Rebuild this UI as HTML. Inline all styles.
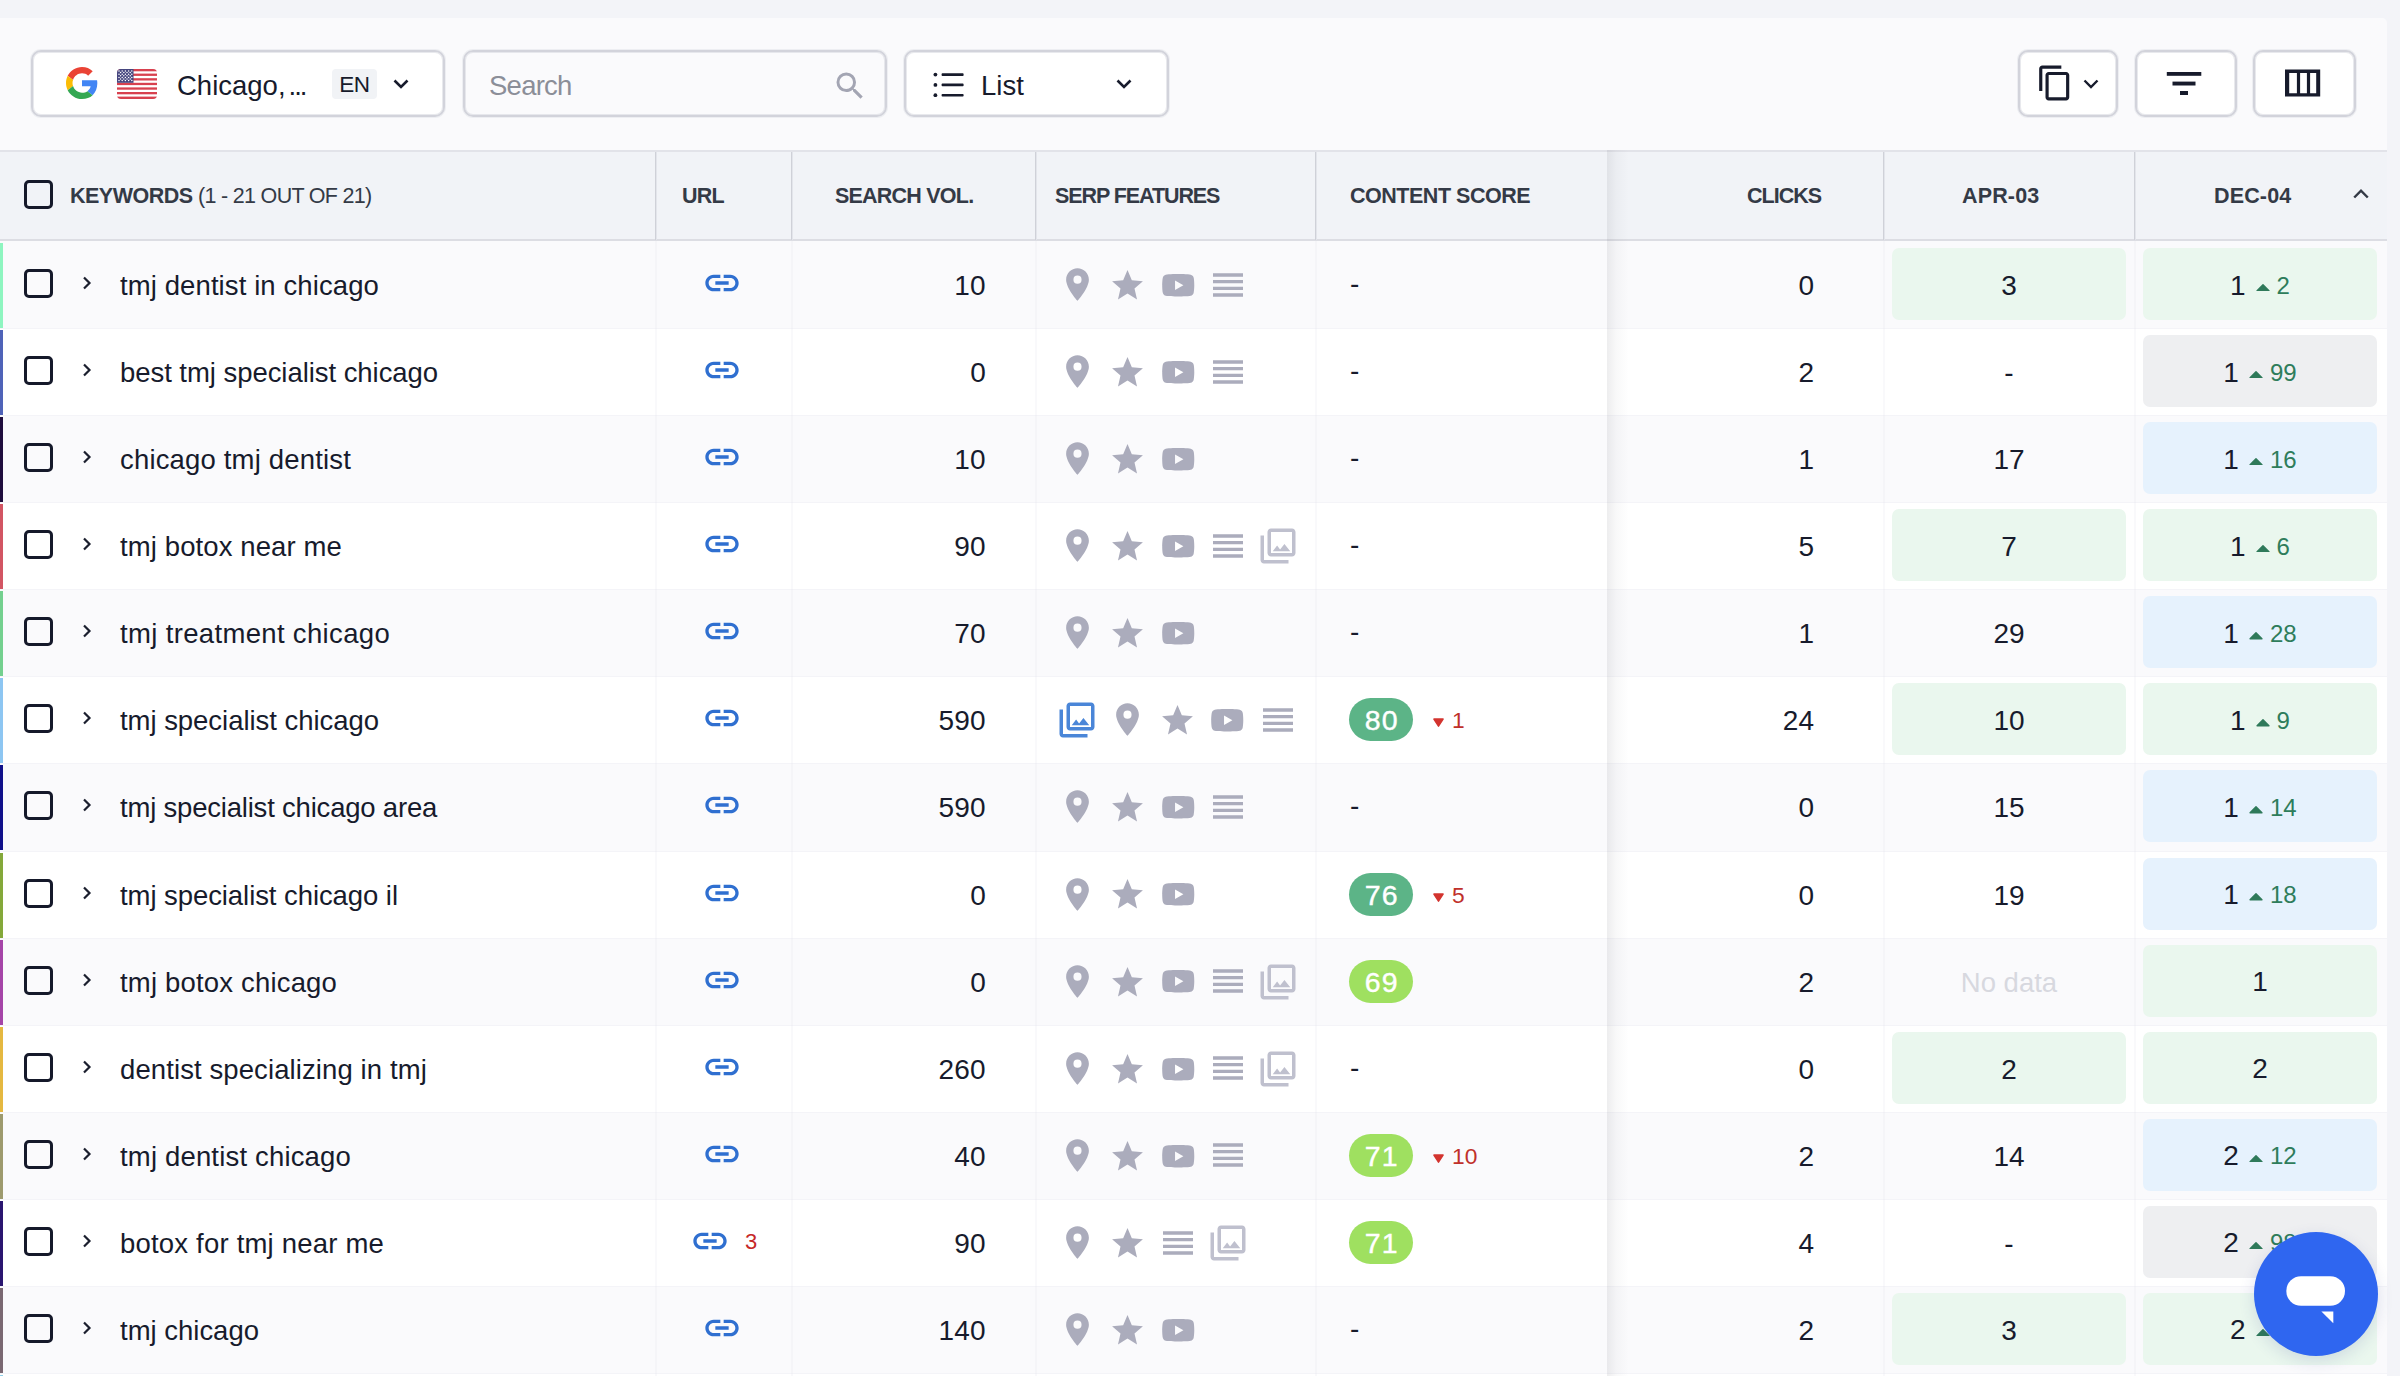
<!DOCTYPE html>
<html lang="en"><head><meta charset="utf-8"><title>Rankings</title>
<style>
*{box-sizing:border-box;margin:0;padding:0}
html,body{width:2400px;height:1376px;overflow:hidden}
body{background:#f3f4f8;font-family:"Liberation Sans",sans-serif;color:#171b2c;position:relative}
i{font-style:normal;display:block}
b{font-weight:normal}
svg{display:block}
.panel{position:absolute;left:0;top:18px;width:2387px;height:1358px;background:#fafafc;border-top-right-radius:5px}
.btn{position:absolute;top:50px;height:67px;background:#fff;border:2px solid #d2d3db;border-radius:10px;box-shadow:inset 0 0 0 1px rgba(210,211,219,.5),0 0 0 1px rgba(210,211,219,.3)}
.btn.clear{background:transparent}
.abs{position:absolute}
.thead{position:absolute;left:0;top:150px;width:2387px;height:91px;background:#f1f3f7;border-top:2px solid #e2e3e9;border-bottom:2px solid #dcdde3}
.th{position:absolute;top:0;height:87px;line-height:88px;font-size:21.500px;font-weight:bold;color:#343a46;white-space:nowrap}
.vsep{position:absolute;top:0;width:2px;height:88px;background:linear-gradient(90deg,#cfd1d8 50%,#e3e5eb 50%)}
.rows{position:absolute;left:0;top:0;width:2387px;height:1376px;overflow:hidden}
.row{position:absolute;left:0;width:2387px;height:88px;box-shadow:inset 0 1px 0 #f4f4f8}
.row:first-child{box-shadow:none}
.row.odd{background:#fafafc}
.row.even{background:#fff}
.row>*{position:absolute}
.strip{left:0;top:2px;width:3px;height:85px}
.cb{left:24px;top:28px;width:29px;height:29px;border:3px solid #15192a;border-radius:5px}
.chev{left:74.700px;top:30px}
.kw{left:120px;top:0;line-height:90px;font-size:27.500px;white-space:nowrap;color:#171b2c}
.lnk{left:702px;top:22px}
.lnk.l2{left:690px}
.uc{left:745px;top:0;line-height:86px;font-size:22px;color:#c62828}
.vol{right:1401px;top:0;line-height:89px;font-size:28px;letter-spacing:.3px;text-align:right}


.dash{left:1350px;top:0;line-height:86px;font-size:28px}
.score{left:1349px;top:22px;width:64px;height:43px;border-radius:22px;color:#fff;font-size:28.500px;line-height:45px;text-align:center;-webkit-text-stroke:.4px #fff;letter-spacing:1.3px;padding-left:1.6px}
.sd{left:1432px;top:1px;height:87px;display:flex;align-items:center;color:#c0302a;font-size:22.800px}
.sd b{margin-left:7px}.sd .dn{margin-top:4px}
.clicks{right:573px;top:0;line-height:89px;font-size:28px;text-align:right}
.apr{left:1892px;top:7px;width:234px;height:72px;border-radius:7px;line-height:75px;text-align:center;font-size:28px}
.dec{left:2143px;top:7px;width:234px;height:72px;padding-top:2px;border-radius:7px;line-height:73px;font-size:28px;display:flex;align-items:center;justify-content:center}
.g{background:#eaf7ee}
.b{background:#e6f2fd}
.x{background:#eeeff1}
.n{color:#d7d8df;font-size:27.500px}
.dec .up{margin:4px 7px 0 10px}
.dec .d{color:#2e7d5b;font-size:24px;padding-top:0}
.csep{position:absolute;top:241px;width:2px;height:1135px;background:rgba(228,230,238,.24)}
.shadow{position:absolute;left:1607px;top:150px;width:22px;height:1226px;background:linear-gradient(90deg,rgba(50,52,64,.085),rgba(50,52,64,.03) 42%,rgba(50,52,64,0))}
.chat{position:absolute;left:2254px;top:1232px;width:124px;height:124px;border-radius:62px;background:#2f66f0;box-shadow:0 5px 16px rgba(40,60,140,.14)}

</style></head>
<body>
<div class="panel"></div>
<!-- toolbar -->
<div class="btn" style="left:31px;width:414px">
  <svg class="abs" style="left:33.300px;top:15.300px" width="32" height="32" viewBox="0 0 48 48"><path fill="#EA4335" d="M24 9.500c3.540 0 6.710 1.220 9.210 3.600l6.850-6.850C35.900 2.380 30.470 0 24 0 14.620 0 6.510 5.380 2.560 13.220l7.980 6.190C12.430 13.720 17.740 9.500 24 9.500z"/><path fill="#4285F4" d="M46.980 24.550c0-1.570-.15-3.090-.38-4.550H24v9.020h12.940c-.58 2.960-2.260 5.480-4.780 7.180l7.730 6c4.510-4.180 7.090-10.360 7.090-17.650z"/><path fill="#FBBC05" d="M10.530 28.590c-.48-1.450-.76-2.990-.76-4.590s.27-3.140.76-4.590l-7.980-6.190C.92 16.460 0 20.120 0 24c0 3.880.92 7.540 2.560 10.780l7.970-6.190z"/><path fill="#34A853" d="M24 48c6.480 0 11.930-2.130 15.890-5.810l-7.730-6c-2.150 1.450-4.920 2.300-8.160 2.300-6.260 0-11.570-4.220-13.470-9.910l-7.980 6.190C6.510 42.620 14.620 48 24 48z"/></svg>
  <svg class="abs" style="left:84px;top:17px" width="40" height="30" viewBox="0 0 40 30"><defs><clipPath id="fc"><rect width="40" height="30" rx="4"/></clipPath></defs><g clip-path="url(#fc)"><rect width="40" height="30" fill="#fff"/><g fill="#d8414f"><rect y="0" width="40" height="2.300"/><rect y="4.600" width="40" height="2.300"/><rect y="9.200" width="40" height="2.300"/><rect y="13.800" width="40" height="2.300"/><rect y="18.400" width="40" height="2.300"/><rect y="23" width="40" height="2.300"/><rect y="27.600" width="40" height="2.400"/></g><rect width="16.500" height="13.800" fill="#46467f"/><g fill="#fff"><circle cx="2" cy="2" r=".75"/><circle cx="5.2" cy="2" r=".75"/><circle cx="8.4" cy="2" r=".75"/><circle cx="11.6" cy="2" r=".75"/><circle cx="14.8" cy="2" r=".75"/><circle cx="2" cy="5.2" r=".75"/><circle cx="5.2" cy="5.2" r=".75"/><circle cx="8.4" cy="5.2" r=".75"/><circle cx="11.6" cy="5.2" r=".75"/><circle cx="14.8" cy="5.2" r=".75"/><circle cx="2" cy="8.4" r=".75"/><circle cx="5.2" cy="8.4" r=".75"/><circle cx="8.4" cy="8.4" r=".75"/><circle cx="11.6" cy="8.4" r=".75"/><circle cx="14.8" cy="8.4" r=".75"/><circle cx="2" cy="11.6" r=".75"/><circle cx="5.2" cy="11.6" r=".75"/><circle cx="8.4" cy="11.6" r=".75"/><circle cx="11.6" cy="11.6" r=".75"/><circle cx="14.8" cy="11.6" r=".75"/><circle cx="3.6" cy="3.6" r=".75"/><circle cx="6.8" cy="3.6" r=".75"/><circle cx="10" cy="3.6" r=".75"/><circle cx="13.2" cy="3.6" r=".75"/><circle cx="3.6" cy="6.8" r=".75"/><circle cx="6.8" cy="6.8" r=".75"/><circle cx="10" cy="6.8" r=".75"/><circle cx="13.2" cy="6.8" r=".75"/><circle cx="3.6" cy="10" r=".75"/><circle cx="6.8" cy="10" r=".75"/><circle cx="10" cy="10" r=".75"/><circle cx="13.2" cy="10" r=".75"/></g></g></svg>
  <span class="abs" style="left:144px;top:0;line-height:68px;font-size:27.500px;white-space:nowrap">Chicago,<b style="letter-spacing:-2px;margin-left:3px">...</b></span>
  <span class="abs" style="left:299px;top:17px;width:45px;height:30px;border-radius:4px;background:#f1f3f6;font-size:22.500px;letter-spacing:-.5px;line-height:31px;text-align:center">EN</span>
  <svg class="abs" style="left:356px;top:20px" width="24" height="24" viewBox="0 0 24 24"><path fill="none" stroke="#171b2c" stroke-width="2.600" d="M5.500 8.500 12 15l6.500-6.500"/></svg>
</div>
<div class="btn clear" style="left:463px;width:424px">
  <span class="abs" style="left:24px;top:0;line-height:68px;font-size:27.500px;letter-spacing:-.75px;color:#8b8e98">Search</span>
  <svg class="abs" style="left:367px;top:16px" width="36" height="36" viewBox="0 0 24 24"><path fill="#a3a5b3" d="M15.500 14h-.79l-.28-.27A6.470 6.470 0 0 0 16 9.500 6.500 6.500 0 1 0 9.500 16c1.610 0 3.090-.59 4.230-1.570l.27.28v.79l5 4.990L20.490 19l-4.990-5zm-6 0C7.010 14 5 11.990 5 9.500S7.010 5 9.500 5 14 7.010 14 9.500 11.990 14 9.500 14z"/></svg>
</div>
<div class="btn" style="left:904px;width:265px">
  <svg class="abs" style="left:25.500px;top:18.500px" width="32" height="26" viewBox="0 0 32 26"><g fill="#171b2c"><circle cx="3.400" cy="3.600" r="1.900"/><circle cx="3.400" cy="13.900" r="1.900"/><circle cx="3.400" cy="24.200" r="1.900"/><rect x="9.600" y="2.300" width="22" height="2.700" rx=".8"/><rect x="9.600" y="12.600" width="22" height="2.700" rx=".8"/><rect x="9.600" y="22.900" width="22" height="2.700" rx=".8"/></g></svg>
  <span class="abs" style="left:75px;top:0;line-height:68px;font-size:27.500px">List</span>
  <svg class="abs" style="left:206px;top:20px" width="24" height="24" viewBox="0 0 24 24"><path fill="none" stroke="#171b2c" stroke-width="2.600" d="M5.500 8.500 12 15l6.500-6.500"/></svg>
</div>
<div class="btn" style="left:2018px;width:100px">
  <svg class="abs" style="left:16.300px;top:12.300px" width="38" height="38" viewBox="0 0 24 24"><path fill="#171b2c" d="M16 1H4c-1.100 0-2 .9-2 2v14h2V3h12V1zm3 4H8c-1.100 0-2 .9-2 2v14c0 1.100.9 2 2 2h11c1.100 0 2-.9 2-2V7c0-1.100-.9-2-2-2zm0 16H8V7h11v14z"/></svg>
  <svg class="abs" style="left:58.500px;top:20px" width="24" height="24" viewBox="0 0 24 24"><path fill="none" stroke="#171b2c" stroke-width="2.400" d="M5.500 8.500 12 15l6.500-6.500"/></svg>
</div>
<div class="btn" style="left:2135px;width:102px">
  <svg class="abs" style="left:29px;top:19px" width="36" height="26" viewBox="0 0 36 26"><g fill="#171b2c"><rect x=".8" y="1" width="34.500" height="3.800"/><rect x="6.500" y="10.600" width="23" height="3.900"/><rect x="14" y="20" width="8" height="4"/></g></svg>
</div>
<div class="btn" style="left:2253px;width:103px">
  <svg class="abs" style="left:30px;top:17px" width="36" height="28" viewBox="0 0 36 28"><g fill="#171b2c"><path fill-rule="evenodd" d="M0 .6h35.200v27H0zM4.200 4v20.200h27V4z"/><rect x="11.900" y="2" width="3.200" height="24"/><rect x="21.900" y="2" width="3.200" height="24"/></g></svg>
</div>
<div class="rows">
<div class="row odd" style="top:241.00px"><i class="strip" style="background:#8ef5c0"></i><i class="cb"></i><span class="chev"><svg viewBox="0 0 24 24" width="24" height="24"><path fill="none" stroke="#1b1f2e" stroke-width="2.200" d="M9 6.500 14.500 12 9 17.500"/></svg></span><span class="kw" style="letter-spacing:0.10px">tmj dentist in chicago</span><span class="lnk"><svg viewBox="0 0 24 24" width="40" height="40"><path fill="#2f6fd0" d="M17 7h-4v2h4c1.650 0 3 1.350 3 3s-1.350 3-3 3h-4v2h4c2.760 0 5-2.240 5-5s-2.240-5-5-5zm-6 8H7c-1.650 0-3-1.350-3-3s1.350-3 3-3h4V7H7c-2.760 0-5 2.240-5 5s2.240 5 5 5h4v-2zm-3-4h8v2H8z"/></svg></span><span class="vol">10</span><svg class="fi" viewBox="0 0 24 24" width="39" height="39" style="left:1057.8px;top:24.0px"><path fill="#abacbc" d="M12 2C8.13 2 5 5.13 5 9c0 5.25 7 13 7 13s7-7.75 7-13c0-3.87-3.13-7-7-7zm0 9.5a2.5 2.5 0 0 1 0-5 2.5 2.5 0 0 1 0 5z"/></svg><svg class="fi" viewBox="0 0 24 24" width="37" height="37" style="left:1109.0px;top:25.9px"><path fill="#abacbc" d="M12 17.27 18.18 21l-1.64-7.03L22 9.24l-7.19-.61L12 2 9.19 8.63 2 9.24l5.46 4.73L5.82 21z"/></svg><svg class="fi" viewBox="0 0 24 24" width="38.5" height="38.5" style="left:1158.5px;top:24.8px"><path fill="#abacbc" d="M21.58 7.19c-.23-.86-.91-1.54-1.77-1.77C18.25 5 12 5 12 5s-6.25 0-7.81.42c-.86.23-1.54.91-1.77 1.77C2 8.75 2 12 2 12s0 3.25.42 4.81c.23.86.91 1.54 1.77 1.77C5.75 19 12 19 12 19s6.250 0 7.810-.42c.86-.23 1.540-.91 1.770-1.770C22 15.250 22 12 22 12s0-3.250-.42-4.810zM10 15V9l5.200 3-5.200 3z"/></svg><svg class="fi" viewBox="0 0 24 24" width="40" height="40" style="left:1207.5px;top:23.7px"><path fill="#abacbc" d="M3 15h18v-2H3v2zm0 4h18v-2H3v2zm0-8h18V9H3v2zm0-6v2h18V5H3z"/></svg><span class="dash">-</span><span class="clicks">0</span><span class="apr g">3</span><span class="dec g"><b class="p">1</b><svg class="up" viewBox="0 0 20 12" width="14" height="8.400"><path fill="#2f7a5a" stroke="#2f7a5a" stroke-width="2" stroke-linejoin="round" d="M1.500 11 10 2.500 18.500 11z"/></svg><b class="d">2</b></span></div>
<div class="row even" style="top:328.08px"><i class="strip" style="background:#4f63b8"></i><i class="cb"></i><span class="chev"><svg viewBox="0 0 24 24" width="24" height="24"><path fill="none" stroke="#1b1f2e" stroke-width="2.200" d="M9 6.500 14.500 12 9 17.500"/></svg></span><span class="kw" style="letter-spacing:-0.05px">best tmj specialist chicago</span><span class="lnk"><svg viewBox="0 0 24 24" width="40" height="40"><path fill="#2f6fd0" d="M17 7h-4v2h4c1.650 0 3 1.350 3 3s-1.350 3-3 3h-4v2h4c2.760 0 5-2.240 5-5s-2.240-5-5-5zm-6 8H7c-1.650 0-3-1.350-3-3s1.350-3 3-3h4V7H7c-2.760 0-5 2.240-5 5s2.240 5 5 5h4v-2zm-3-4h8v2H8z"/></svg></span><span class="vol">0</span><svg class="fi" viewBox="0 0 24 24" width="39" height="39" style="left:1057.8px;top:24.0px"><path fill="#abacbc" d="M12 2C8.13 2 5 5.13 5 9c0 5.25 7 13 7 13s7-7.75 7-13c0-3.87-3.13-7-7-7zm0 9.5a2.5 2.5 0 0 1 0-5 2.5 2.5 0 0 1 0 5z"/></svg><svg class="fi" viewBox="0 0 24 24" width="37" height="37" style="left:1109.0px;top:25.9px"><path fill="#abacbc" d="M12 17.27 18.18 21l-1.64-7.03L22 9.24l-7.19-.61L12 2 9.19 8.63 2 9.24l5.46 4.73L5.82 21z"/></svg><svg class="fi" viewBox="0 0 24 24" width="38.5" height="38.5" style="left:1158.5px;top:24.8px"><path fill="#abacbc" d="M21.58 7.19c-.23-.86-.91-1.54-1.77-1.77C18.25 5 12 5 12 5s-6.25 0-7.81.42c-.86.23-1.54.91-1.77 1.77C2 8.75 2 12 2 12s0 3.25.42 4.81c.23.86.91 1.54 1.77 1.77C5.75 19 12 19 12 19s6.250 0 7.810-.42c.86-.23 1.540-.91 1.770-1.770C22 15.250 22 12 22 12s0-3.250-.42-4.810zM10 15V9l5.200 3-5.200 3z"/></svg><svg class="fi" viewBox="0 0 24 24" width="40" height="40" style="left:1207.5px;top:23.7px"><path fill="#abacbc" d="M3 15h18v-2H3v2zm0 4h18v-2H3v2zm0-8h18V9H3v2zm0-6v2h18V5H3z"/></svg><span class="dash">-</span><span class="clicks">2</span><span class="apr ">-</span><span class="dec x"><b class="p">1</b><svg class="up" viewBox="0 0 20 12" width="14" height="8.400"><path fill="#2f7a5a" stroke="#2f7a5a" stroke-width="2" stroke-linejoin="round" d="M1.500 11 10 2.500 18.500 11z"/></svg><b class="d">99</b></span></div>
<div class="row odd" style="top:415.16px"><i class="strip" style="background:#1f0d3d"></i><i class="cb"></i><span class="chev"><svg viewBox="0 0 24 24" width="24" height="24"><path fill="none" stroke="#1b1f2e" stroke-width="2.200" d="M9 6.500 14.500 12 9 17.500"/></svg></span><span class="kw" style="letter-spacing:0.17px">chicago tmj dentist</span><span class="lnk"><svg viewBox="0 0 24 24" width="40" height="40"><path fill="#2f6fd0" d="M17 7h-4v2h4c1.650 0 3 1.350 3 3s-1.350 3-3 3h-4v2h4c2.760 0 5-2.240 5-5s-2.240-5-5-5zm-6 8H7c-1.650 0-3-1.350-3-3s1.350-3 3-3h4V7H7c-2.760 0-5 2.240-5 5s2.240 5 5 5h4v-2zm-3-4h8v2H8z"/></svg></span><span class="vol">10</span><svg class="fi" viewBox="0 0 24 24" width="39" height="39" style="left:1057.8px;top:24.0px"><path fill="#abacbc" d="M12 2C8.13 2 5 5.13 5 9c0 5.25 7 13 7 13s7-7.75 7-13c0-3.87-3.13-7-7-7zm0 9.5a2.5 2.5 0 0 1 0-5 2.5 2.5 0 0 1 0 5z"/></svg><svg class="fi" viewBox="0 0 24 24" width="37" height="37" style="left:1109.0px;top:25.9px"><path fill="#abacbc" d="M12 17.27 18.18 21l-1.64-7.03L22 9.24l-7.19-.61L12 2 9.19 8.63 2 9.24l5.46 4.73L5.82 21z"/></svg><svg class="fi" viewBox="0 0 24 24" width="38.5" height="38.5" style="left:1158.5px;top:24.8px"><path fill="#abacbc" d="M21.58 7.19c-.23-.86-.91-1.54-1.77-1.77C18.25 5 12 5 12 5s-6.25 0-7.81.42c-.86.23-1.54.91-1.77 1.77C2 8.75 2 12 2 12s0 3.25.42 4.81c.23.86.91 1.54 1.77 1.77C5.75 19 12 19 12 19s6.250 0 7.810-.42c.86-.23 1.540-.91 1.770-1.770C22 15.250 22 12 22 12s0-3.250-.42-4.810zM10 15V9l5.200 3-5.200 3z"/></svg><span class="dash">-</span><span class="clicks">1</span><span class="apr ">17</span><span class="dec b"><b class="p">1</b><svg class="up" viewBox="0 0 20 12" width="14" height="8.400"><path fill="#2f7a5a" stroke="#2f7a5a" stroke-width="2" stroke-linejoin="round" d="M1.500 11 10 2.500 18.500 11z"/></svg><b class="d">16</b></span></div>
<div class="row even" style="top:502.24px"><i class="strip" style="background:#d25563"></i><i class="cb"></i><span class="chev"><svg viewBox="0 0 24 24" width="24" height="24"><path fill="none" stroke="#1b1f2e" stroke-width="2.200" d="M9 6.500 14.500 12 9 17.500"/></svg></span><span class="kw" style="letter-spacing:0.11px">tmj botox near me</span><span class="lnk"><svg viewBox="0 0 24 24" width="40" height="40"><path fill="#2f6fd0" d="M17 7h-4v2h4c1.650 0 3 1.350 3 3s-1.350 3-3 3h-4v2h4c2.760 0 5-2.240 5-5s-2.240-5-5-5zm-6 8H7c-1.650 0-3-1.350-3-3s1.350-3 3-3h4V7H7c-2.760 0-5 2.240-5 5s2.240 5 5 5h4v-2zm-3-4h8v2H8z"/></svg></span><span class="vol">90</span><svg class="fi" viewBox="0 0 24 24" width="39" height="39" style="left:1057.8px;top:24.0px"><path fill="#abacbc" d="M12 2C8.13 2 5 5.13 5 9c0 5.25 7 13 7 13s7-7.75 7-13c0-3.87-3.13-7-7-7zm0 9.5a2.5 2.5 0 0 1 0-5 2.5 2.5 0 0 1 0 5z"/></svg><svg class="fi" viewBox="0 0 24 24" width="37" height="37" style="left:1109.0px;top:25.9px"><path fill="#abacbc" d="M12 17.27 18.18 21l-1.64-7.03L22 9.24l-7.19-.61L12 2 9.19 8.63 2 9.24l5.46 4.73L5.82 21z"/></svg><svg class="fi" viewBox="0 0 24 24" width="38.5" height="38.5" style="left:1158.5px;top:24.8px"><path fill="#abacbc" d="M21.58 7.19c-.23-.86-.91-1.54-1.77-1.77C18.25 5 12 5 12 5s-6.25 0-7.81.42c-.86.23-1.54.91-1.77 1.77C2 8.75 2 12 2 12s0 3.25.42 4.81c.23.86.91 1.54 1.77 1.77C5.75 19 12 19 12 19s6.250 0 7.810-.42c.86-.23 1.540-.91 1.770-1.770C22 15.250 22 12 22 12s0-3.250-.42-4.810zM10 15V9l5.200 3-5.200 3z"/></svg><svg class="fi" viewBox="0 0 24 24" width="40" height="40" style="left:1207.5px;top:23.7px"><path fill="#abacbc" d="M3 15h18v-2H3v2zm0 4h18v-2H3v2zm0-8h18V9H3v2zm0-6v2h18V5H3z"/></svg><svg class="fi" viewBox="0 0 24 24" width="42" height="42" style="left:1256.8px;top:23.0px"><path fill="#bfc0ce" d="M20 4v12H8V4h12m0-2H8c-1.100 0-2 .9-2 2v12c0 1.100.9 2 2 2h12c1.100 0 2-.9 2-2V4c0-1.100-.9-2-2-2zm-8.500 9.670 1.690 2.260 2.480-3.100L19 15H9zM2 6v14c0 1.100.9 2 2 2h14v-2H4V6H2z"/></svg><span class="dash">-</span><span class="clicks">5</span><span class="apr g">7</span><span class="dec g"><b class="p">1</b><svg class="up" viewBox="0 0 20 12" width="14" height="8.400"><path fill="#2f7a5a" stroke="#2f7a5a" stroke-width="2" stroke-linejoin="round" d="M1.500 11 10 2.500 18.500 11z"/></svg><b class="d">6</b></span></div>
<div class="row odd" style="top:589.32px"><i class="strip" style="background:#74d08f"></i><i class="cb"></i><span class="chev"><svg viewBox="0 0 24 24" width="24" height="24"><path fill="none" stroke="#1b1f2e" stroke-width="2.200" d="M9 6.500 14.500 12 9 17.500"/></svg></span><span class="kw" style="letter-spacing:0.34px">tmj treatment chicago</span><span class="lnk"><svg viewBox="0 0 24 24" width="40" height="40"><path fill="#2f6fd0" d="M17 7h-4v2h4c1.650 0 3 1.350 3 3s-1.350 3-3 3h-4v2h4c2.760 0 5-2.240 5-5s-2.240-5-5-5zm-6 8H7c-1.650 0-3-1.350-3-3s1.350-3 3-3h4V7H7c-2.760 0-5 2.240-5 5s2.240 5 5 5h4v-2zm-3-4h8v2H8z"/></svg></span><span class="vol">70</span><svg class="fi" viewBox="0 0 24 24" width="39" height="39" style="left:1057.8px;top:24.0px"><path fill="#abacbc" d="M12 2C8.13 2 5 5.13 5 9c0 5.25 7 13 7 13s7-7.75 7-13c0-3.87-3.13-7-7-7zm0 9.5a2.5 2.5 0 0 1 0-5 2.5 2.5 0 0 1 0 5z"/></svg><svg class="fi" viewBox="0 0 24 24" width="37" height="37" style="left:1109.0px;top:25.9px"><path fill="#abacbc" d="M12 17.27 18.18 21l-1.64-7.03L22 9.24l-7.19-.61L12 2 9.19 8.63 2 9.24l5.46 4.73L5.82 21z"/></svg><svg class="fi" viewBox="0 0 24 24" width="38.5" height="38.5" style="left:1158.5px;top:24.8px"><path fill="#abacbc" d="M21.58 7.19c-.23-.86-.91-1.54-1.77-1.77C18.25 5 12 5 12 5s-6.25 0-7.81.42c-.86.23-1.54.91-1.77 1.77C2 8.75 2 12 2 12s0 3.25.42 4.81c.23.86.91 1.54 1.77 1.77C5.75 19 12 19 12 19s6.250 0 7.810-.42c.86-.23 1.540-.91 1.770-1.770C22 15.250 22 12 22 12s0-3.250-.42-4.810zM10 15V9l5.200 3-5.200 3z"/></svg><span class="dash">-</span><span class="clicks">1</span><span class="apr ">29</span><span class="dec b"><b class="p">1</b><svg class="up" viewBox="0 0 20 12" width="14" height="8.400"><path fill="#2f7a5a" stroke="#2f7a5a" stroke-width="2" stroke-linejoin="round" d="M1.500 11 10 2.500 18.500 11z"/></svg><b class="d">28</b></span></div>
<div class="row even" style="top:676.40px"><i class="strip" style="background:#8dc6f2"></i><i class="cb"></i><span class="chev"><svg viewBox="0 0 24 24" width="24" height="24"><path fill="none" stroke="#1b1f2e" stroke-width="2.200" d="M9 6.500 14.500 12 9 17.500"/></svg></span><span class="kw" style="letter-spacing:-0.04px">tmj specialist chicago</span><span class="lnk"><svg viewBox="0 0 24 24" width="40" height="40"><path fill="#2f6fd0" d="M17 7h-4v2h4c1.650 0 3 1.350 3 3s-1.350 3-3 3h-4v2h4c2.760 0 5-2.240 5-5s-2.240-5-5-5zm-6 8H7c-1.650 0-3-1.350-3-3s1.350-3 3-3h4V7H7c-2.760 0-5 2.240-5 5s2.240 5 5 5h4v-2zm-3-4h8v2H8z"/></svg></span><span class="vol">590</span><svg class="fi" viewBox="0 0 24 24" width="42" height="42" style="left:1056.3px;top:23.0px"><path fill="#4a86d8" d="M20 4v12H8V4h12m0-2H8c-1.100 0-2 .9-2 2v12c0 1.100.9 2 2 2h12c1.100 0 2-.9 2-2V4c0-1.100-.9-2-2-2zm-8.500 9.670 1.690 2.260 2.480-3.100L19 15H9zM2 6v14c0 1.100.9 2 2 2h14v-2H4V6H2z"/></svg><svg class="fi" viewBox="0 0 24 24" width="39" height="39" style="left:1108.0px;top:24.0px"><path fill="#abacbc" d="M12 2C8.13 2 5 5.13 5 9c0 5.25 7 13 7 13s7-7.75 7-13c0-3.87-3.13-7-7-7zm0 9.5a2.5 2.5 0 0 1 0-5 2.5 2.5 0 0 1 0 5z"/></svg><svg class="fi" viewBox="0 0 24 24" width="37" height="37" style="left:1159.3px;top:25.9px"><path fill="#abacbc" d="M12 17.27 18.18 21l-1.64-7.03L22 9.24l-7.19-.61L12 2 9.19 8.63 2 9.24l5.46 4.73L5.82 21z"/></svg><svg class="fi" viewBox="0 0 24 24" width="38.5" height="38.5" style="left:1208.2px;top:24.8px"><path fill="#abacbc" d="M21.58 7.19c-.23-.86-.91-1.54-1.77-1.77C18.25 5 12 5 12 5s-6.25 0-7.81.42c-.86.23-1.54.91-1.77 1.77C2 8.75 2 12 2 12s0 3.25.42 4.81c.23.86.91 1.54 1.77 1.77C5.75 19 12 19 12 19s6.250 0 7.810-.42c.86-.23 1.540-.91 1.770-1.770C22 15.250 22 12 22 12s0-3.250-.42-4.810zM10 15V9l5.200 3-5.200 3z"/></svg><svg class="fi" viewBox="0 0 24 24" width="40" height="40" style="left:1257.8px;top:23.7px"><path fill="#abacbc" d="M3 15h18v-2H3v2zm0 4h18v-2H3v2zm0-8h18V9H3v2zm0-6v2h18V5H3z"/></svg><span class="score" style="background:#5cb487">80</span><span class="sd"><svg class="dn" viewBox="0 0 14 12" width="13" height="11"><path fill="#d3342f" stroke="#d3342f" stroke-width="1.600" stroke-linejoin="round" d="M2 2.200h10L7 10z"/></svg><b>1</b></span><span class="clicks">24</span><span class="apr g">10</span><span class="dec g"><b class="p">1</b><svg class="up" viewBox="0 0 20 12" width="14" height="8.400"><path fill="#2f7a5a" stroke="#2f7a5a" stroke-width="2" stroke-linejoin="round" d="M1.500 11 10 2.500 18.500 11z"/></svg><b class="d">9</b></span></div>
<div class="row odd" style="top:763.48px"><i class="strip" style="background:#10108a"></i><i class="cb"></i><span class="chev"><svg viewBox="0 0 24 24" width="24" height="24"><path fill="none" stroke="#1b1f2e" stroke-width="2.200" d="M9 6.500 14.500 12 9 17.500"/></svg></span><span class="kw" style="letter-spacing:-0.20px">tmj specialist chicago area</span><span class="lnk"><svg viewBox="0 0 24 24" width="40" height="40"><path fill="#2f6fd0" d="M17 7h-4v2h4c1.650 0 3 1.350 3 3s-1.350 3-3 3h-4v2h4c2.760 0 5-2.240 5-5s-2.240-5-5-5zm-6 8H7c-1.650 0-3-1.350-3-3s1.350-3 3-3h4V7H7c-2.760 0-5 2.240-5 5s2.240 5 5 5h4v-2zm-3-4h8v2H8z"/></svg></span><span class="vol">590</span><svg class="fi" viewBox="0 0 24 24" width="39" height="39" style="left:1057.8px;top:24.0px"><path fill="#abacbc" d="M12 2C8.13 2 5 5.13 5 9c0 5.25 7 13 7 13s7-7.75 7-13c0-3.87-3.13-7-7-7zm0 9.5a2.5 2.5 0 0 1 0-5 2.5 2.5 0 0 1 0 5z"/></svg><svg class="fi" viewBox="0 0 24 24" width="37" height="37" style="left:1109.0px;top:25.9px"><path fill="#abacbc" d="M12 17.27 18.18 21l-1.64-7.03L22 9.24l-7.19-.61L12 2 9.19 8.63 2 9.24l5.46 4.73L5.82 21z"/></svg><svg class="fi" viewBox="0 0 24 24" width="38.5" height="38.5" style="left:1158.5px;top:24.8px"><path fill="#abacbc" d="M21.58 7.19c-.23-.86-.91-1.54-1.77-1.77C18.25 5 12 5 12 5s-6.25 0-7.81.42c-.86.23-1.54.91-1.77 1.77C2 8.75 2 12 2 12s0 3.25.42 4.81c.23.86.91 1.54 1.77 1.77C5.75 19 12 19 12 19s6.250 0 7.810-.42c.86-.23 1.540-.91 1.770-1.770C22 15.250 22 12 22 12s0-3.250-.42-4.810zM10 15V9l5.200 3-5.200 3z"/></svg><svg class="fi" viewBox="0 0 24 24" width="40" height="40" style="left:1207.5px;top:23.7px"><path fill="#abacbc" d="M3 15h18v-2H3v2zm0 4h18v-2H3v2zm0-8h18V9H3v2zm0-6v2h18V5H3z"/></svg><span class="dash">-</span><span class="clicks">0</span><span class="apr ">15</span><span class="dec b"><b class="p">1</b><svg class="up" viewBox="0 0 20 12" width="14" height="8.400"><path fill="#2f7a5a" stroke="#2f7a5a" stroke-width="2" stroke-linejoin="round" d="M1.500 11 10 2.500 18.500 11z"/></svg><b class="d">14</b></span></div>
<div class="row even" style="top:850.56px"><i class="strip" style="background:#84a83a"></i><i class="cb"></i><span class="chev"><svg viewBox="0 0 24 24" width="24" height="24"><path fill="none" stroke="#1b1f2e" stroke-width="2.200" d="M9 6.500 14.500 12 9 17.500"/></svg></span><span class="kw" style="letter-spacing:-0.07px">tmj specialist chicago il</span><span class="lnk"><svg viewBox="0 0 24 24" width="40" height="40"><path fill="#2f6fd0" d="M17 7h-4v2h4c1.650 0 3 1.350 3 3s-1.350 3-3 3h-4v2h4c2.760 0 5-2.240 5-5s-2.240-5-5-5zm-6 8H7c-1.650 0-3-1.350-3-3s1.350-3 3-3h4V7H7c-2.760 0-5 2.240-5 5s2.240 5 5 5h4v-2zm-3-4h8v2H8z"/></svg></span><span class="vol">0</span><svg class="fi" viewBox="0 0 24 24" width="39" height="39" style="left:1057.8px;top:24.0px"><path fill="#abacbc" d="M12 2C8.13 2 5 5.13 5 9c0 5.25 7 13 7 13s7-7.75 7-13c0-3.87-3.13-7-7-7zm0 9.5a2.5 2.5 0 0 1 0-5 2.5 2.5 0 0 1 0 5z"/></svg><svg class="fi" viewBox="0 0 24 24" width="37" height="37" style="left:1109.0px;top:25.9px"><path fill="#abacbc" d="M12 17.27 18.18 21l-1.64-7.03L22 9.24l-7.19-.61L12 2 9.19 8.63 2 9.24l5.46 4.73L5.82 21z"/></svg><svg class="fi" viewBox="0 0 24 24" width="38.5" height="38.5" style="left:1158.5px;top:24.8px"><path fill="#abacbc" d="M21.58 7.19c-.23-.86-.91-1.54-1.77-1.77C18.25 5 12 5 12 5s-6.25 0-7.81.42c-.86.23-1.54.91-1.77 1.77C2 8.75 2 12 2 12s0 3.25.42 4.81c.23.86.91 1.54 1.77 1.77C5.75 19 12 19 12 19s6.250 0 7.810-.42c.86-.23 1.540-.91 1.770-1.770C22 15.250 22 12 22 12s0-3.250-.42-4.810zM10 15V9l5.200 3-5.200 3z"/></svg><span class="score" style="background:#5cb487">76</span><span class="sd"><svg class="dn" viewBox="0 0 14 12" width="13" height="11"><path fill="#d3342f" stroke="#d3342f" stroke-width="1.600" stroke-linejoin="round" d="M2 2.200h10L7 10z"/></svg><b>5</b></span><span class="clicks">0</span><span class="apr ">19</span><span class="dec b"><b class="p">1</b><svg class="up" viewBox="0 0 20 12" width="14" height="8.400"><path fill="#2f7a5a" stroke="#2f7a5a" stroke-width="2" stroke-linejoin="round" d="M1.500 11 10 2.500 18.500 11z"/></svg><b class="d">18</b></span></div>
<div class="row odd" style="top:937.64px"><i class="strip" style="background:#a545a8"></i><i class="cb"></i><span class="chev"><svg viewBox="0 0 24 24" width="24" height="24"><path fill="none" stroke="#1b1f2e" stroke-width="2.200" d="M9 6.500 14.500 12 9 17.500"/></svg></span><span class="kw" style="letter-spacing:0.18px">tmj botox chicago</span><span class="lnk"><svg viewBox="0 0 24 24" width="40" height="40"><path fill="#2f6fd0" d="M17 7h-4v2h4c1.650 0 3 1.350 3 3s-1.350 3-3 3h-4v2h4c2.760 0 5-2.240 5-5s-2.240-5-5-5zm-6 8H7c-1.650 0-3-1.350-3-3s1.350-3 3-3h4V7H7c-2.760 0-5 2.240-5 5s2.240 5 5 5h4v-2zm-3-4h8v2H8z"/></svg></span><span class="vol">0</span><svg class="fi" viewBox="0 0 24 24" width="39" height="39" style="left:1057.8px;top:24.0px"><path fill="#abacbc" d="M12 2C8.13 2 5 5.13 5 9c0 5.25 7 13 7 13s7-7.75 7-13c0-3.87-3.13-7-7-7zm0 9.5a2.5 2.5 0 0 1 0-5 2.5 2.5 0 0 1 0 5z"/></svg><svg class="fi" viewBox="0 0 24 24" width="37" height="37" style="left:1109.0px;top:25.9px"><path fill="#abacbc" d="M12 17.27 18.18 21l-1.64-7.03L22 9.24l-7.19-.61L12 2 9.19 8.63 2 9.24l5.46 4.73L5.82 21z"/></svg><svg class="fi" viewBox="0 0 24 24" width="38.5" height="38.5" style="left:1158.5px;top:24.8px"><path fill="#abacbc" d="M21.58 7.19c-.23-.86-.91-1.54-1.77-1.77C18.25 5 12 5 12 5s-6.25 0-7.81.42c-.86.23-1.54.91-1.77 1.77C2 8.75 2 12 2 12s0 3.25.42 4.81c.23.86.91 1.54 1.77 1.77C5.75 19 12 19 12 19s6.250 0 7.810-.42c.86-.23 1.540-.91 1.770-1.770C22 15.250 22 12 22 12s0-3.250-.42-4.810zM10 15V9l5.200 3-5.200 3z"/></svg><svg class="fi" viewBox="0 0 24 24" width="40" height="40" style="left:1207.5px;top:23.7px"><path fill="#abacbc" d="M3 15h18v-2H3v2zm0 4h18v-2H3v2zm0-8h18V9H3v2zm0-6v2h18V5H3z"/></svg><svg class="fi" viewBox="0 0 24 24" width="42" height="42" style="left:1256.8px;top:23.0px"><path fill="#bfc0ce" d="M20 4v12H8V4h12m0-2H8c-1.100 0-2 .9-2 2v12c0 1.100.9 2 2 2h12c1.100 0 2-.9 2-2V4c0-1.100-.9-2-2-2zm-8.500 9.670 1.690 2.260 2.480-3.100L19 15H9zM2 6v14c0 1.100.9 2 2 2h14v-2H4V6H2z"/></svg><span class="score" style="background:#9fe060">69</span><span class="clicks">2</span><span class="apr n">No data</span><span class="dec g"><b class="p">1</b></span></div>
<div class="row even" style="top:1024.72px"><i class="strip" style="background:#e5b840"></i><i class="cb"></i><span class="chev"><svg viewBox="0 0 24 24" width="24" height="24"><path fill="none" stroke="#1b1f2e" stroke-width="2.200" d="M9 6.500 14.500 12 9 17.500"/></svg></span><span class="kw" style="letter-spacing:0.10px">dentist specializing in tmj</span><span class="lnk"><svg viewBox="0 0 24 24" width="40" height="40"><path fill="#2f6fd0" d="M17 7h-4v2h4c1.650 0 3 1.350 3 3s-1.350 3-3 3h-4v2h4c2.760 0 5-2.240 5-5s-2.240-5-5-5zm-6 8H7c-1.650 0-3-1.350-3-3s1.350-3 3-3h4V7H7c-2.760 0-5 2.240-5 5s2.240 5 5 5h4v-2zm-3-4h8v2H8z"/></svg></span><span class="vol">260</span><svg class="fi" viewBox="0 0 24 24" width="39" height="39" style="left:1057.8px;top:24.0px"><path fill="#abacbc" d="M12 2C8.13 2 5 5.13 5 9c0 5.25 7 13 7 13s7-7.75 7-13c0-3.87-3.13-7-7-7zm0 9.5a2.5 2.5 0 0 1 0-5 2.5 2.5 0 0 1 0 5z"/></svg><svg class="fi" viewBox="0 0 24 24" width="37" height="37" style="left:1109.0px;top:25.9px"><path fill="#abacbc" d="M12 17.27 18.18 21l-1.64-7.03L22 9.24l-7.19-.61L12 2 9.19 8.63 2 9.24l5.46 4.73L5.82 21z"/></svg><svg class="fi" viewBox="0 0 24 24" width="38.5" height="38.5" style="left:1158.5px;top:24.8px"><path fill="#abacbc" d="M21.58 7.19c-.23-.86-.91-1.54-1.77-1.77C18.25 5 12 5 12 5s-6.25 0-7.81.42c-.86.23-1.54.91-1.77 1.77C2 8.75 2 12 2 12s0 3.25.42 4.81c.23.86.91 1.54 1.77 1.77C5.75 19 12 19 12 19s6.250 0 7.810-.42c.86-.23 1.540-.91 1.770-1.770C22 15.250 22 12 22 12s0-3.250-.42-4.810zM10 15V9l5.200 3-5.200 3z"/></svg><svg class="fi" viewBox="0 0 24 24" width="40" height="40" style="left:1207.5px;top:23.7px"><path fill="#abacbc" d="M3 15h18v-2H3v2zm0 4h18v-2H3v2zm0-8h18V9H3v2zm0-6v2h18V5H3z"/></svg><svg class="fi" viewBox="0 0 24 24" width="42" height="42" style="left:1256.8px;top:23.0px"><path fill="#bfc0ce" d="M20 4v12H8V4h12m0-2H8c-1.100 0-2 .9-2 2v12c0 1.100.9 2 2 2h12c1.100 0 2-.9 2-2V4c0-1.100-.9-2-2-2zm-8.500 9.670 1.690 2.260 2.480-3.100L19 15H9zM2 6v14c0 1.100.9 2 2 2h14v-2H4V6H2z"/></svg><span class="dash">-</span><span class="clicks">0</span><span class="apr g">2</span><span class="dec g"><b class="p">2</b></span></div>
<div class="row odd" style="top:1111.80px"><i class="strip" style="background:#9d9a6e"></i><i class="cb"></i><span class="chev"><svg viewBox="0 0 24 24" width="24" height="24"><path fill="none" stroke="#1b1f2e" stroke-width="2.200" d="M9 6.500 14.500 12 9 17.500"/></svg></span><span class="kw" style="letter-spacing:0.17px">tmj dentist chicago</span><span class="lnk"><svg viewBox="0 0 24 24" width="40" height="40"><path fill="#2f6fd0" d="M17 7h-4v2h4c1.650 0 3 1.350 3 3s-1.350 3-3 3h-4v2h4c2.760 0 5-2.240 5-5s-2.240-5-5-5zm-6 8H7c-1.650 0-3-1.350-3-3s1.350-3 3-3h4V7H7c-2.760 0-5 2.240-5 5s2.240 5 5 5h4v-2zm-3-4h8v2H8z"/></svg></span><span class="vol">40</span><svg class="fi" viewBox="0 0 24 24" width="39" height="39" style="left:1057.8px;top:24.0px"><path fill="#abacbc" d="M12 2C8.13 2 5 5.13 5 9c0 5.25 7 13 7 13s7-7.75 7-13c0-3.87-3.13-7-7-7zm0 9.5a2.5 2.5 0 0 1 0-5 2.5 2.5 0 0 1 0 5z"/></svg><svg class="fi" viewBox="0 0 24 24" width="37" height="37" style="left:1109.0px;top:25.9px"><path fill="#abacbc" d="M12 17.27 18.18 21l-1.64-7.03L22 9.24l-7.19-.61L12 2 9.19 8.63 2 9.24l5.46 4.73L5.82 21z"/></svg><svg class="fi" viewBox="0 0 24 24" width="38.5" height="38.5" style="left:1158.5px;top:24.8px"><path fill="#abacbc" d="M21.58 7.19c-.23-.86-.91-1.54-1.77-1.77C18.25 5 12 5 12 5s-6.25 0-7.81.42c-.86.23-1.54.91-1.77 1.77C2 8.75 2 12 2 12s0 3.25.42 4.81c.23.86.91 1.54 1.77 1.77C5.75 19 12 19 12 19s6.250 0 7.810-.42c.86-.23 1.540-.91 1.770-1.770C22 15.250 22 12 22 12s0-3.250-.42-4.810zM10 15V9l5.200 3-5.200 3z"/></svg><svg class="fi" viewBox="0 0 24 24" width="40" height="40" style="left:1207.5px;top:23.7px"><path fill="#abacbc" d="M3 15h18v-2H3v2zm0 4h18v-2H3v2zm0-8h18V9H3v2zm0-6v2h18V5H3z"/></svg><span class="score" style="background:#9fe060">71</span><span class="sd"><svg class="dn" viewBox="0 0 14 12" width="13" height="11"><path fill="#d3342f" stroke="#d3342f" stroke-width="1.600" stroke-linejoin="round" d="M2 2.200h10L7 10z"/></svg><b>10</b></span><span class="clicks">2</span><span class="apr ">14</span><span class="dec b"><b class="p">2</b><svg class="up" viewBox="0 0 20 12" width="14" height="8.400"><path fill="#2f7a5a" stroke="#2f7a5a" stroke-width="2" stroke-linejoin="round" d="M1.500 11 10 2.500 18.500 11z"/></svg><b class="d">12</b></span></div>
<div class="row even" style="top:1198.88px"><i class="strip" style="background:#2a1670"></i><i class="cb"></i><span class="chev"><svg viewBox="0 0 24 24" width="24" height="24"><path fill="none" stroke="#1b1f2e" stroke-width="2.200" d="M9 6.500 14.500 12 9 17.500"/></svg></span><span class="kw" style="letter-spacing:0.20px">botox for tmj near me</span><span class="lnk l2"><svg viewBox="0 0 24 24" width="40" height="40"><path fill="#2f6fd0" d="M17 7h-4v2h4c1.650 0 3 1.350 3 3s-1.350 3-3 3h-4v2h4c2.760 0 5-2.240 5-5s-2.240-5-5-5zm-6 8H7c-1.650 0-3-1.350-3-3s1.350-3 3-3h4V7H7c-2.760 0-5 2.240-5 5s2.240 5 5 5h4v-2zm-3-4h8v2H8z"/></svg></span><span class="uc">3</span><span class="vol">90</span><svg class="fi" viewBox="0 0 24 24" width="39" height="39" style="left:1057.8px;top:24.0px"><path fill="#abacbc" d="M12 2C8.13 2 5 5.13 5 9c0 5.25 7 13 7 13s7-7.75 7-13c0-3.87-3.13-7-7-7zm0 9.5a2.5 2.5 0 0 1 0-5 2.5 2.5 0 0 1 0 5z"/></svg><svg class="fi" viewBox="0 0 24 24" width="37" height="37" style="left:1109.0px;top:25.9px"><path fill="#abacbc" d="M12 17.27 18.18 21l-1.64-7.03L22 9.24l-7.19-.61L12 2 9.19 8.63 2 9.24l5.46 4.73L5.82 21z"/></svg><svg class="fi" viewBox="0 0 24 24" width="40" height="40" style="left:1157.8px;top:23.7px"><path fill="#abacbc" d="M3 15h18v-2H3v2zm0 4h18v-2H3v2zm0-8h18V9H3v2zm0-6v2h18V5H3z"/></svg><svg class="fi" viewBox="0 0 24 24" width="42" height="42" style="left:1206.5px;top:23.0px"><path fill="#bfc0ce" d="M20 4v12H8V4h12m0-2H8c-1.100 0-2 .9-2 2v12c0 1.100.9 2 2 2h12c1.100 0 2-.9 2-2V4c0-1.100-.9-2-2-2zm-8.500 9.670 1.690 2.260 2.480-3.100L19 15H9zM2 6v14c0 1.100.9 2 2 2h14v-2H4V6H2z"/></svg><span class="score" style="background:#9fe060">71</span><span class="clicks">4</span><span class="apr ">-</span><span class="dec x"><b class="p">2</b><svg class="up" viewBox="0 0 20 12" width="14" height="8.400"><path fill="#2f7a5a" stroke="#2f7a5a" stroke-width="2" stroke-linejoin="round" d="M1.500 11 10 2.500 18.500 11z"/></svg><b class="d">98</b></span></div>
<div class="row odd" style="top:1285.96px"><i class="strip" style="background:#7a6872"></i><i class="cb"></i><span class="chev"><svg viewBox="0 0 24 24" width="24" height="24"><path fill="none" stroke="#1b1f2e" stroke-width="2.200" d="M9 6.500 14.500 12 9 17.500"/></svg></span><span class="kw" style="letter-spacing:-0.01px">tmj chicago</span><span class="lnk"><svg viewBox="0 0 24 24" width="40" height="40"><path fill="#2f6fd0" d="M17 7h-4v2h4c1.650 0 3 1.350 3 3s-1.350 3-3 3h-4v2h4c2.760 0 5-2.240 5-5s-2.240-5-5-5zm-6 8H7c-1.650 0-3-1.350-3-3s1.350-3 3-3h4V7H7c-2.760 0-5 2.240-5 5s2.240 5 5 5h4v-2zm-3-4h8v2H8z"/></svg></span><span class="vol">140</span><svg class="fi" viewBox="0 0 24 24" width="39" height="39" style="left:1057.8px;top:24.0px"><path fill="#abacbc" d="M12 2C8.13 2 5 5.13 5 9c0 5.25 7 13 7 13s7-7.75 7-13c0-3.87-3.13-7-7-7zm0 9.5a2.5 2.5 0 0 1 0-5 2.5 2.5 0 0 1 0 5z"/></svg><svg class="fi" viewBox="0 0 24 24" width="37" height="37" style="left:1109.0px;top:25.9px"><path fill="#abacbc" d="M12 17.27 18.18 21l-1.64-7.03L22 9.24l-7.19-.61L12 2 9.19 8.63 2 9.24l5.46 4.73L5.82 21z"/></svg><svg class="fi" viewBox="0 0 24 24" width="38.5" height="38.5" style="left:1158.5px;top:24.8px"><path fill="#abacbc" d="M21.58 7.19c-.23-.86-.91-1.54-1.77-1.77C18.25 5 12 5 12 5s-6.25 0-7.81.42c-.86.23-1.54.91-1.77 1.77C2 8.75 2 12 2 12s0 3.25.42 4.81c.23.86.91 1.54 1.77 1.77C5.75 19 12 19 12 19s6.250 0 7.810-.42c.86-.23 1.540-.91 1.770-1.770C22 15.250 22 12 22 12s0-3.250-.42-4.810zM10 15V9l5.200 3-5.200 3z"/></svg><span class="dash">-</span><span class="clicks">2</span><span class="apr g">3</span><span class="dec g"><b class="p">2</b><svg class="up" viewBox="0 0 20 12" width="14" height="8.400"><path fill="#2f7a5a" stroke="#2f7a5a" stroke-width="2" stroke-linejoin="round" d="M1.500 11 10 2.500 18.500 11z"/></svg><b class="d">1</b></span></div>
<div class="row even" style="top:1373.04px"><i class="strip" style="background:#8fd0e8"></i></div>
</div>
<!-- column separators in body -->
<i class="csep" style="left:655px"></i><i class="csep" style="left:791px"></i><i class="csep" style="left:1035px"></i><i class="csep" style="left:1315px"></i><i class="csep" style="left:1883px"></i><i class="csep" style="left:2134px"></i>
<!-- header -->
<div class="thead">
  <i class="cb abs" style="left:24px;top:28px"></i>
  <span class="th" style="left:70px;letter-spacing:-.5px">KEYWORDS <b style="font-weight:normal;letter-spacing:-.7px;margin-left:0">(1 - 21 OUT OF 21)</b></span>
  <i class="vsep" style="left:655px"></i>
  <span class="th" style="left:682px;letter-spacing:-.8px">URL</span>
  <i class="vsep" style="left:791px"></i>
  <span class="th" style="left:835px;letter-spacing:-.78px">SEARCH VOL.</span>
  <i class="vsep" style="left:1035px"></i>
  <span class="th" style="left:1055px;letter-spacing:-1.08px">SERP FEATURES</span>
  <i class="vsep" style="left:1315px"></i>
  <span class="th" style="left:1350px;letter-spacing:-.48px">CONTENT SCORE</span>
  <span class="th" style="left:1747px;letter-spacing:-1px">CLICKS</span>
  <i class="vsep" style="left:1883px"></i>
  <span class="th" style="left:1962px;letter-spacing:.15px">APR-03</span>
  <i class="vsep" style="left:2134px"></i>
  <span class="th" style="left:2214px;letter-spacing:.15px">DEC-04</span>
  <svg class="abs" style="left:2346.500px;top:28px" width="28" height="28" viewBox="0 0 24 24"><path fill="none" stroke="#343a46" stroke-width="2.100" d="M6.200 15 12 9.200 17.800 15"/></svg>
</div>
<div class="shadow"></div>
<div class="chat">
  <svg class="abs" style="left:0;top:0" width="124" height="124" viewBox="0 0 124 124"><rect x="32.300" y="44.200" width="58.700" height="29.500" rx="14.750" fill="#fff"/><path fill="#fff" d="M67.400 79.400h11.900v11.900z"/></svg>
</div>
</body></html>
